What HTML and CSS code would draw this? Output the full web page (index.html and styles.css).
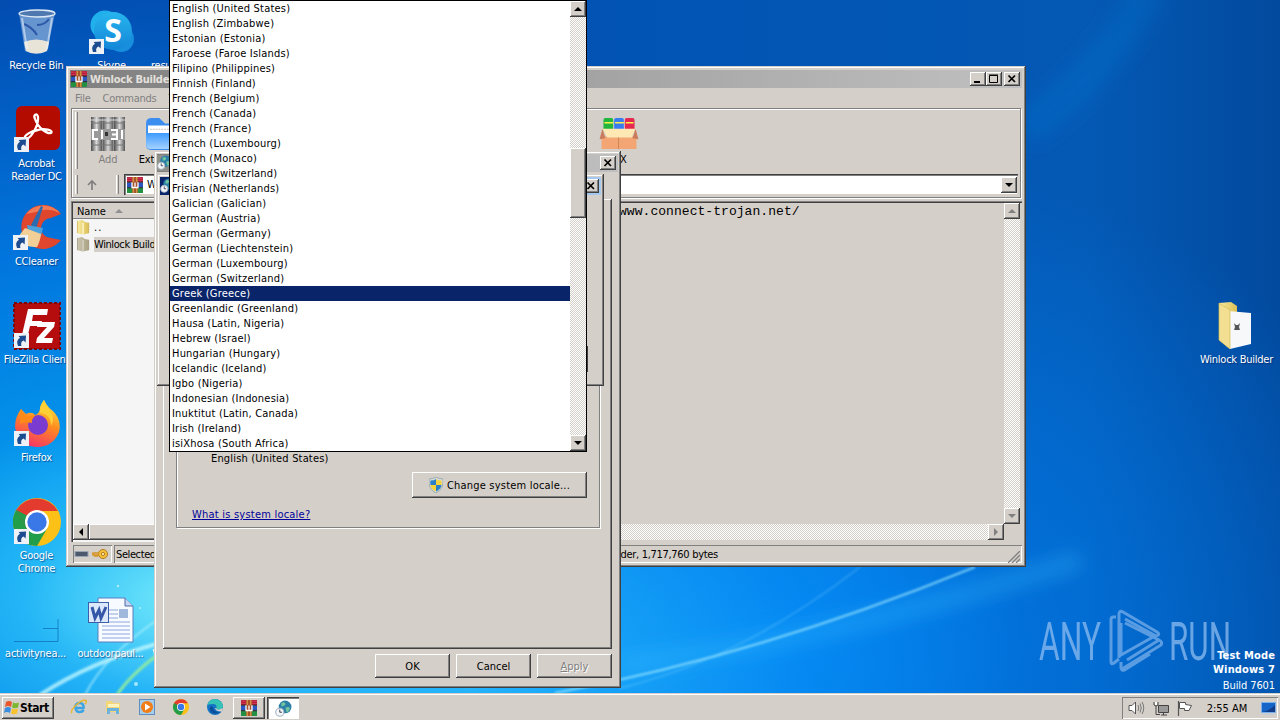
FILE: index.html
```html
<!DOCTYPE html>
<html lang="en">
<head>
<meta charset="utf-8">
<title>Desktop</title>
<link rel="stylesheet" href="styles.css">
</head>
<body>
<svg class="defs" width="0" height="0">
  <defs>
    <linearGradient id="gFold" x1="0" x2="1"><stop offset="0" stop-color="#f8eba0"/><stop offset="1" stop-color="#dcbf55"/></linearGradient>
    <linearGradient id="gFire" x1="0.7" y1="0" x2="0.3" y2="1"><stop offset="0" stop-color="#ffe53b"/><stop offset=".45" stop-color="#ff8b20"/><stop offset="1" stop-color="#f5306a"/></linearGradient>
    <linearGradient id="gSky" x1="0" y1="0" x2="0" y2="1"><stop offset="0" stop-color="#27b5ee"/><stop offset="1" stop-color="#1486d8"/></linearGradient>
    <linearGradient id="gBlue" x1="0" y1="0" x2="0" y2="1"><stop offset="0" stop-color="#3d9bff"/><stop offset="1" stop-color="#a5d2ff"/></linearGradient>
    <linearGradient id="gBook" x1="0" x2="1"><stop offset="0" stop-color="#4a4a4a"/><stop offset=".5" stop-color="#d8d8d8"/><stop offset="1" stop-color="#555"/></linearGradient>
    <symbol id="short" viewBox="0 0 15 15"><rect width="15" height="15" fill="#eef2f6"/><path d="M4 13 Q1.5 7.5 6 4.8 L4.6 3 L12 2.4 L11.6 9.4 L9.6 7.6 Q6.3 9 7.4 13 Z" fill="#1d4b90"/></symbol>
    <symbol id="rar" viewBox="0 0 16 16"><rect x="0" y="0" width="16" height="5" fill="#b3203c"/><rect x="0" y="5.5" width="16" height="5" fill="#2b55c0"/><rect x="0" y="11" width="16" height="5" fill="#239044"/><path d="M0 1.2h16M0 3.6h16" stroke="#e0405c" stroke-width=".7"/><path d="M0 5.2h16M0 10.7h16" stroke="#222"/><rect x="5.2" width="5.6" height="16" fill="#a6532c"/><path d="M6.2 0v5M9.8 0v5M6.2 11v5M9.8 11v5" stroke="#e6b04a"/><path d="M5 5.3v5.2h6V5.3M8 5.5v4" stroke="#fff" stroke-width="1.3" fill="none"/></symbol>
    <symbol id="chrome" viewBox="0 0 48 48"><circle cx="24" cy="24" r="24" fill="#fbc116"/><path d="M3.2 12A24 24 0 0 0 24 48L34.4 30H24Z" fill="#229d4a"/><path d="M3.2 12 13.6 30 24 24 24 13H44.8A24 24 0 0 0 3.2 12Z" fill="#e33b2e"/><path d="M3.2 12 13.6 30 19 20Z" fill="#229d4a"/><circle cx="24" cy="24" r="12" fill="#fff"/><circle cx="24" cy="24" r="9.7" fill="#3b78e7"/></symbol>
    <symbol id="folder" viewBox="0 0 13 16"><path d="M0 1 5 0 8 2 12 3V14L6 15.5 0 14Z" fill="url(#gFold)"/><path d="M6 3V15.5" stroke="#fff8d0" stroke-width="1.5"/><path d="M0 1V14M12 3V14" stroke="#c9a94a" stroke-width=".8"/></symbol>
    <symbol id="x" viewBox="0 0 16 14"><path d="M4.5 3.5 11 10M11 3.5 4.500 10" stroke="#000" stroke-width="1.7"/></symbol>
    <symbol id="globe" viewBox="0 0 16 16"><circle cx="9.500" cy="6.500" r="6" fill="#2b7fa6"/><path d="M6 3q3-2 4 1-1 2-4 2zM10 7q4-1 4 1l-2 4q-2-1-2-5z" fill="#74c4a0"/><circle cx="4.500" cy="11.500" r="3.800" fill="#f4f8fa" stroke="#a8b4c0"/><path d="M4.500 9V11.500H6.500" stroke="#334" stroke-width=".9" fill="none"/></symbol>
  </defs>
</svg>

<main class="desktop">
  <svg class="wall" width="1280" height="693" viewBox="0 0 1280 693">
    <defs><filter id="soft"><feGaussianBlur stdDeviation="1.1"/></filter><filter id="wide"><feGaussianBlur stdDeviation="9"/></filter></defs>
    <g fill="none" filter="url(#wide)">
      <path d="M620 665Q830 640 1080 560" stroke="#3cc0ff" stroke-opacity=".3" stroke-width="18"/>
      <path d="M1025 130Q1120 60 1150 -20" stroke="#0c7cd8" stroke-opacity=".25" stroke-width="36"/>
    </g>
    <g fill="none" filter="url(#soft)">
      <path d="M40 695Q90 662 160 643" stroke="#c8fbff" stroke-opacity=".75" stroke-width="4"/>
      <path d="M85 695Q105 655 160 618" stroke="#bff6ff" stroke-opacity=".6" stroke-width="2"/>
      <path d="M117 695Q130 675 160 653" stroke="#9aee9a" stroke-opacity=".9" stroke-width="3"/>
      <path d="M555 693Q760 655 975 567" stroke="#a5ecff" stroke-opacity=".7" stroke-width="2"/>
      <path d="M620 688Q740 660 860 567" stroke="#9be4ff" stroke-opacity=".3" stroke-width="1.500"/>
    </g>
    <g fill="#d8fbff" fill-opacity=".7"><circle cx="136" cy="684" r="2"/><circle cx="118" cy="586" r="1.200"/><circle cx="140" cy="608" r="1"/></g>
  </svg>

  <div class="dicon" style="left:-1px;top:8px">
    <svg width="46" height="46" viewBox="0 0 46 46"><path d="M5 4 11 42Q23 48 33 42L41 4Z" fill="#a8c2e0" fill-opacity=".6"/><path d="M10 33Q22 28 35 33L33 42Q22 47 12 42Z" fill="#e8e4d8"/><ellipse cx="23" cy="4.500" rx="18" ry="3.500" fill="#5078b0" stroke="#dce9f5" stroke-width="1.300"/><path d="M10 15q8 3 13 11M35 10q-4 6-12 6" stroke="#2c56a8" stroke-width="2" fill="none"/><path d="M8 9 13 40M38 9 33 40" stroke="#eef6ff" stroke-opacity=".55" stroke-width="2"/></svg>
    <span>Recycle Bin</span></div>
  <div class="dicon" style="left:74px;top:8px">
    <svg width="48" height="48" viewBox="0 0 48 48"><circle cx="17" cy="17" r="14.500" fill="#20b0ec"/><circle cx="33" cy="31" r="13" fill="#178fdc"/><circle cx="25" cy="23" r="19" fill="url(#gSky)"/><text x="25" y="34" text-anchor="middle" class="skype-s">S</text><use href="#short" x="1" y="31" width="15" height="15"/></svg>
    <span>Skype</span></div>
  <div class="dicon" style="left:134px;top:8px"><i class="blank"></i><span>resulta...</span></div>
  <div class="dicon" style="left:-1px;top:106px">
    <svg width="48" height="48" viewBox="0 0 48 48"><rect x="3" y="0" width="44" height="44" rx="6" fill="#b30b00"/><path d="M12 33C17 34 26 20 25 11 24 6 20 9 22 13 25 22 34 28 38 27 41 24 31 22 25 24 19 25 10 29 12 33Z" fill="none" stroke="#fff" stroke-width="2.300"/><use href="#short" x="1" y="31" width="15" height="15"/></svg>
    <span>Acrobat<br>Reader DC</span></div>
  <div class="dicon" style="left:-1px;top:204px">
    <svg width="50" height="48" viewBox="0 0 50 48"><path d="M49 10A22 22 0 1 0 49 36L39 34A10 10 0 1 1 39 14Z" fill="#e0452d"/><path d="M48 9A22 22 0 0 0 14 10L24 8Q36 3 48 9Z" fill="#f47a55"/><path d="M31 3 24 25 19 21 29 2Z" fill="#2b6cb0"/><path d="M15 21 31 24 29 32 16 27Z" fill="#4aa0dc"/><path d="M13 24 29 30Q28 38 25 43 12 44 6 33Z" fill="#f3cf98"/><use href="#short" x="1" y="31" width="15" height="15"/></svg>
    <span>CCleaner</span></div>
  <div class="dicon" style="left:-1px;top:302px">
    <svg width="48" height="48" viewBox="0 0 48 48"><rect x="1" y="1" width="46" height="46" fill="#b50d0d" stroke="#7c0707" stroke-width="2" stroke-dasharray="3 2"/><path d="M15 7H35L34 13H20L19 19H29L28 24H17L14 37H8Z" fill="#fff"/><path d="M25 20H42L41 25 31 36H40L39 41H23L24 36 34 25H24Z" fill="#fff"/><use href="#short" x="1" y="31" width="15" height="15"/></svg>
    <span>FileZilla Client</span></div>
  <div class="dicon" style="left:-1px;top:400px">
    <svg width="48" height="48" viewBox="0 0 48 48"><path d="M31 0Q35 8 40 11 49 20 46 32 40 47 24 47 5 46 2 27 2 17 8 9L13 14Q19 11 22 15 26 14 27 9 27 5 31 0Z" fill="url(#gFire)"/><circle cx="25" cy="25" r="10" fill="#7a3bd0"/><path d="M8 9 13 17 23 15Q18 19 19 23 12 21 7 24Z" fill="#ff8a18"/><path d="M27 13Q38 14 38 26 42 20 38 12 34 8 31 0 26 7 27 13Z" fill="#ffcf36"/><use href="#short" x="1" y="31" width="15" height="15"/></svg>
    <span>Firefox</span></div>
  <div class="dicon" style="left:-1px;top:498px">
    <svg width="48" height="48" viewBox="0 0 48 48"><use href="#chrome" width="48" height="48"/><use href="#short" x="1" y="31" width="15" height="15"/></svg>
    <span>Google<br>Chrome</span></div>
  <div class="dicon" style="left:-2px;top:596px">
    <svg width="46" height="46" viewBox="0 0 46 46"><path d="M1 44.500H45V22M30 31.500H45" stroke="#0c70b8" stroke-opacity=".75" fill="none"/></svg>
    <span>activitynea...</span></div>
  <div class="dicon" style="left:73px;top:596px">
    <svg width="46" height="46" viewBox="0 0 46 46"><path d="M10 1H37L45 9V45H10Z" fill="#f7faff" stroke="#5a7fc0"/><path d="M37 1V9H45" fill="#c6d6f0" stroke="#4a69a8"/><path d="M14 13H30M14 17H30M14 21H30M14 25H42M14 29H42M14 33H42M14 37H42M14 41H42" stroke="#90a8dc"/><rect x="31" y="12" width="9" height="9" fill="#9fb8dc"/><rect x="0.500" y="5.500" width="20" height="20" fill="#dce8fb" stroke="#3b5fa8"/><path d="M4 10 7 21 11 13 13 21 18 10" fill="none" stroke="#3457a8" stroke-width="3"/></svg>
    <span>outdoorpaul...</span></div>
  <div class="dicon" style="left:127px;top:596px"><i class="blank"></i><span>Word</span></div>
  <div class="dicon" style="left:1199px;top:302px">
    <svg width="46" height="48" viewBox="0 0 46 48"><path d="M5 1 17 0 23 4V40L16 47 5 38Z" fill="url(#gFold)"/><path d="M14 9 37 11V42L16 47Z" fill="#f7f8fa"/><path d="M5 1 16 8V47L5 38Z" fill="#f2df92" stroke="#d6bc58" stroke-width=".7"/><path d="M20 21l2 2h2l2-2-1 4 1 3h-6l1-3z" fill="#555"/></svg>
    <span>Winlock Builder</span></div>

  <div class="mark">
    <svg width="196" height="66" viewBox="0 0 196 66"><g fill="#8dbcf0"><text x="2" y="52" textLength="62" lengthAdjust="spacingAndGlyphs">ANY</text><text x="132" y="52" textLength="62" lengthAdjust="spacingAndGlyphs">RUN</text></g><path d="M79 9H76Q74 9 74 12V54Q74 57 77 55L82 51M82 50V6Q82 2 86 4L120 24Q124 27 119 28L88 11M85 61 124 37Q126 34 122 32L88 15M84 54V60Q85 64 89 61L113 46M90 52 122 32M84 15V47L116 29" fill="none" stroke="#78aeea" stroke-width="3"/></svg>
  </div>
  <div class="build"><b>Test Mode</b><b>Windows 7</b><span>Build 7601</span></div>

  <section class="win rar-win">
    <header class="title"><svg width="17" height="16"><use href="#rar" width="16" height="16"/></svg><b>Winlock Builder</b>
      <div class="ctl"><i class="tb"><svg width="16" height="14"><path d="M4 10h6" stroke="#000" stroke-width="2"/></svg></i><i class="tb"><svg width="16" height="14"><path d="M3.500 3.500h8v7h-8zM3 3h9" fill="none" stroke="#000"/></svg></i><i class="tb gap"><svg width="16" height="14"><use href="#x" width="16" height="14"/></svg></i></div>
    </header>
    <nav class="menu"><span>File</span><span>Commands</span><span>Tools</span></nav>
    <div class="toolbar">
      <div class="tools">
        <i class="grip"></i>
        <div class="tool dim"><svg width="34" height="34" viewBox="0 0 34 34"><rect width="11" height="34" fill="url(#gBook)"/><rect x="11.500" width="11" height="34" fill="url(#gBook)"/><rect x="23" width="11" height="34" fill="url(#gBook)"/><path d="M0 6h34M0 28h34" stroke="#777"/><path d="M0 3h34" stroke="#ddd"/><rect y="12" width="34" height="11" fill="#9a9a9a"/><path d="M7 13H2v9h5M11 13v9M20 13h6v9h-6M21 17.500h4M31 13v9" stroke="#fff" stroke-width="2" fill="none"/><path d="M14 15h3v4h-3z" fill="#333"/></svg><span>Add</span></div>
        <div class="tool ext"><svg width="40" height="36" viewBox="0 0 40 36"><path d="M0 6Q0 1 6 1H14L20 7H38V30Q38 35 32 35H6Q0 35 0 30Z" fill="#3c8df0"/><path d="M2 9H40V18H2Z" fill="#fff"/><path d="M0 17H40V34H6Q0 34 0 29Z" fill="url(#gBlue)"/><path d="M4 13H36" stroke="#bbb" stroke-dasharray="2 1"/></svg><span>Extract To</span></div>
        <div class="tool sfx"><svg width="40" height="35" viewBox="0 0 40 35"><rect x="4" y="1" width="10" height="14" rx="2" fill="#22b63c"/><rect x="15" y="1" width="10" height="14" rx="2" fill="#377cf0"/><rect x="26" y="1" width="10" height="14" rx="2" fill="#e42850"/><path d="M5 6h9M16 6h9M27 6h8" stroke="#fff04a" stroke-width="1.500"/><path d="M2 20H38V33H2Z" fill="#f3a674"/><path d="M3 12H37L33 21H8Z" fill="#ffe8b4"/><path d="M3 12 0 23 6 22ZM37 12 40 23 34 22Z" fill="#c97b5a"/><path d="M19.500 21V33" stroke="#d08558"/></svg><span>SFX</span></div>
      </div>
      <div class="address">
        <i class="grip"></i><svg class="go-up" width="12" height="12" viewBox="0 0 12 12"><path d="M6 11V2M2 6 6 2 10 6" stroke="#808080" stroke-width="1.700" fill="none"/></svg><i class="grip second"></i>
        <div class="combo"><svg width="17" height="16"><use href="#rar" width="16" height="16"/></svg><span>Winlock</span><i class="sb"><b class="dn"></b></i></div>
      </div>
    </div>
    <div class="panes">
      <div class="list">
        <div class="head">Name<i class="tri"></i></div>
        <div class="row"><svg width="13" height="15"><use href="#folder" width="13" height="15"/></svg><span class="dots">..</span></div>
        <div class="row sel"><svg width="13" height="15"><use href="#folder" width="13" height="15"/></svg><span>Winlock Builder</span></div>
        <div class="hbar"><i class="sb"><b class="lf"></b></i><i class="thumb"></i></div>
      </div>
      <div class="comment">
        <pre>www.connect-trojan.net/</pre>
        <div class="vbar"><i class="sb"><b class="up g"></b></i><i class="sb"><b class="dn g"></b></i></div>
        <div class="hbar"><i class="sb"><b class="rt g"></b></i></div>
      </div>
    </div>
    <footer class="status"><div class="cell icons"><svg width="36" height="12" viewBox="0 0 36 12"><rect x="1" y="3.500" width="13" height="5" fill="#4c586c" stroke="#98a4b4"/><circle cx="29" cy="6" r="4.500" fill="#f5c13c" stroke="#b4781c"/><circle cx="29" cy="6" r="1.600" fill="#fff2b0" stroke="#b4781c"/><path d="M25 5H19V7H25M20 8H24" stroke="#d59424" stroke-width="1.600" fill="none"/></svg></div><div class="cell chosen">Selected 1 folder</div><div class="cell total">Total 1 folder, 1,717,760 bytes<svg class="size" width="12" height="12"><path d="M0 12 12 0M4 12 12 4M8 12 12 8" stroke="#808080" stroke-width="1.300"/></svg></div></footer>
  </section>

  <section class="win region">
    <header class="title"><svg width="16" height="16"><rect width="16" height="16" fill="#90908a"/><use href="#globe" width="15" height="15"/></svg><div class="ctl"><i class="tb"><svg width="16" height="14"><use href="#x" width="16" height="14"/></svg></i></div></header>
    <div class="page">
      <div class="group">
        <p class="locale">English (United States)</p>
        <button class="btn change"><svg width="14" height="16" viewBox="0 0 14 16"><path d="M7 0Q10 2 14 2 15 12 7 16 -1 12 0 2 4 2 7 0Z" fill="#d8dde2" stroke="#9aa"/><path d="M7 2V8H1.500Q1 5 1.500 3.500 5 3.500 7 2ZM7 8h5.500Q12 12 7 14.500Z" fill="#2a7fc8"/><path d="M7 2Q9 3.500 12.500 3.500 13 6 12.500 8H7ZM7 8V14.500Q2 12 1.500 8Z" fill="#f6d33c"/></svg><span>Change system locale...</span></button>
        <a class="link">What is system locale?</a>
      </div>
    </div>
    <div class="actions"><button class="btn">OK</button><button class="btn">Cancel</button><button class="btn off"><u>A</u>pply</button></div>
  </section>

  <section class="win inner">
    <header class="title"><svg width="16" height="16"><use href="#globe" width="15" height="15"/></svg><div class="ctl"><i class="tb"><svg width="16" height="14"><use href="#x" width="16" height="14"/></svg></i></div></header>
    <i class="edge"></i>
  </section>

  <section class="drop">
    <ul>
      <li>English (United States)</li><li>English (Zimbabwe)</li><li>Estonian (Estonia)</li><li>Faroese (Faroe Islands)</li><li>Filipino (Philippines)</li><li>Finnish (Finland)</li><li>French (Belgium)</li><li>French (Canada)</li><li>French (France)</li><li>French (Luxembourg)</li><li>French (Monaco)</li><li>French (Switzerland)</li><li>Frisian (Netherlands)</li><li>Galician (Galician)</li><li>German (Austria)</li><li>German (Germany)</li><li>German (Liechtenstein)</li><li>German (Luxembourg)</li><li>German (Switzerland)</li><li class="on">Greek (Greece)</li><li>Greenlandic (Greenland)</li><li>Hausa (Latin, Nigeria)</li><li>Hebrew (Israel)</li><li>Hungarian (Hungary)</li><li>Icelandic (Iceland)</li><li>Igbo (Nigeria)</li><li>Indonesian (Indonesia)</li><li>Inuktitut (Latin, Canada)</li><li>Irish (Ireland)</li><li>isiXhosa (South Africa)</li>
    </ul>
    <div class="vbar"><i class="sb"><b class="up"></b></i><i class="thumb"></i><i class="sb"><b class="dn"></b></i></div>
  </section>
</main>

<footer class="taskbar">
  <div class="start"><svg width="16" height="16" viewBox="0 0 16 16"><path d="M2 2Q5 0 8 2L7 7Q4 5 1 7Z" fill="#e8562a"/><path d="M9 2.500Q12 4 15 2.500L14 7.500Q11 9 8 7.500Z" fill="#7cb82f"/><path d="M1 8Q4 6 7 8L6 13Q3 11 0 13Z" fill="#3a8ee0"/><path d="M8 8.500Q11 10 14 8.500L13 13.500Q10 15 7 13.500Z" fill="#f8c22c"/></svg><b>Start</b></div>
  <div class="quick">
    <svg width="16" height="16" viewBox="0 0 16 16"><path d="M13.500 9H4.500Q5 13 8.500 13 11.500 13 12.800 11" fill="none" stroke="#3ba4e4" stroke-width="2.300"/><path d="M4 8.500Q4.500 4 8.500 4 12.800 4 12.800 9" fill="none" stroke="#3ba4e4" stroke-width="2.300"/><path d="M1 14Q-1 12 5 6 12 0 15 1.500 16 3 14 5" fill="none" stroke="#e8b62c" stroke-width="1.400"/></svg>
    <svg width="16" height="16" viewBox="0 0 16 16"><path d="M1 2H7L8 4H15V13H1Z" fill="#f3d676"/><path d="M3 5H14V8H3Z" fill="#fff4c0"/><path d="M2 9H14V15H11V12H5V15H2Z" fill="#6db3e0"/></svg>
    <svg width="16" height="16" viewBox="0 0 16 16"><rect x=".5" y=".5" width="15" height="15" fill="#a8cdea" stroke="#5c8fc0"/><circle cx="8" cy="8" r="6" fill="#f07d18"/><path d="M6 4.500 11.500 8 6 11.500Z" fill="#fff"/></svg>
    <svg width="16" height="16"><use href="#chrome" width="16" height="16"/></svg>
    <svg width="16" height="16" viewBox="0 0 16 16"><circle cx="8" cy="8" r="8" fill="#1574c4"/><path d="M.5 6Q2 0 8 0 15 1 16 7 16 10 12 10.500 9 10.500 9.500 9 10 5 6 5 2 5 .5 6Z" fill="#34c3b4"/><path d="M6 8Q6 13 13 13 9 16 5 14 1 11 4 7Z" fill="#0c4f9c"/><path d="M9.500 9Q9 10.500 12 10.500L16 9 15 12.500Q9 13 8 9Z" fill="#d5cfc9"/></svg>
  </div>
  <div class="task"><svg width="16" height="16"><use href="#rar" width="16" height="16"/></svg></div>
  <div class="task down"><svg width="17" height="17"><use href="#globe" width="17" height="17"/></svg></div>
  <div class="tray">
    <svg width="17" height="14" viewBox="0 0 17 14"><path d="M1 4.500H4L7.500 1V13L4 9.500H1Z" fill="#fff" stroke="#555"/><path d="M10 4Q11.500 7 10 10M12 2.500Q14.500 7 12 11.500M14 1Q17.500 7 14 13" fill="none" stroke="#777"/></svg>
    <svg width="16" height="15" viewBox="0 0 16 15"><path d="M5.500 4.500H15.500V11.500H5.500Z" fill="#999" stroke="#444"/><path d="M1 1V4Q3 6 5 4V1M3 5V13.500H7M8 14H14M10.500 12V14" stroke="#444" fill="none"/><path d="M2 1h2v3H2z" fill="#fff"/></svg>
    <svg width="16" height="15" viewBox="0 0 16 15"><path d="M1.500 0V15" stroke="#555" stroke-width="1.200"/><path d="M2.500 1.500H8.500V3.500L14.500 4.500 12 9.500H7.500V7.500H2.500Z" fill="#fff" stroke="#555"/></svg>
    <span>2:55 AM</span>
    <svg width="15" height="13" viewBox="0 0 15 13"><rect x=".5" y=".5" width="14" height="10" fill="#1565c8" stroke="#7ab0ea"/><path d="M1 10Q8 9 14 3V10Z" fill="#123c88"/><path d="M2 12H13" stroke="#bcd"/></svg>
  </div>
</footer>
</body>
</html>
```
FILE: styles.css
```css
* { box-sizing: border-box; }
body { margin: 0; width: 1280px; height: 720px; overflow: hidden; display: flex; flex-direction: column;
  font: 11px/13px "DejaVu Sans Condensed", "DejaVu Sans", sans-serif; font-stretch: condensed; letter-spacing: -0.25px; color: #000; }
svg { display: block; flex: none; }
i { font-style: normal; }
.defs { position: absolute; }

.desktop { position: relative; height: 693px; flex: none; overflow: hidden;
  background:
    radial-gradient(ellipse 330px 190px at 190px 600px, rgba(125,240,250,.95), rgba(60,205,250,.55) 50%, rgba(30,170,245,0) 100%),
    radial-gradient(ellipse 560px 430px at 470px 690px, rgba(40,185,255,.9), rgba(10,150,250,.5) 60%, rgba(0,110,220,0) 100%),
    radial-gradient(ellipse 800px 620px at 100px 560px, #06a6f4, rgba(0,130,235,.8) 50%, rgba(0,80,190,0) 100%),
    radial-gradient(ellipse 700px 500px at 760px 640px, rgba(0,130,245,.9), rgba(0,110,225,0) 100%),
    linear-gradient(90deg, #0343a6, #0254b4 50%, #0459b4 85%, #024a9e); }
.wall { position: absolute; left: 0; top: 0; }

.dicon { position: absolute; width: 75px; display: flex; flex-direction: column; align-items: center; color: #fff; text-align: center; }
.dicon > svg, .blank { height: 48px; margin-bottom: 3px; }
.dicon span { white-space: nowrap; text-shadow: 1px 1px 1px rgba(0,30,90,.6); }
.skype-s { font: bold 32px "Open Sans", sans-serif; fill: #fff; }

.mark { position: absolute; left: 1037px; top: 608px; opacity: .75; }
.mark svg { overflow: visible; }
.mark text { font: 400 53px Roboto, sans-serif; letter-spacing: 0; }
.build { position: absolute; right: 5px; top: 649px; display: flex; flex-direction: column; align-items: flex-end; color: #fff; line-height: 14px; letter-spacing: -.1px; }
.build b { letter-spacing: .15px; }
.build span { margin-top: 2px; }

.win { position: absolute; background: #d5cfc9; display: flex; flex-direction: column; padding: 4px;
  box-shadow: inset -1px -1px #404040, inset 1px 1px #d5cfc9, inset -2px -2px #808080, inset 2px 2px #fff; }
.title { height: 18px; flex: none; display: flex; align-items: center; padding: 0 2px 0 1px; color: #e4e0dc;
  background: linear-gradient(90deg, #808080, #c0c0c0); }
.title b { margin-left: 2px; }
.ctl { margin-left: auto; display: flex; }
.tb, .sb, .thumb { background: #d5cfc9; box-shadow: inset -1px -1px #404040, inset 1px 1px #fff, inset -2px -2px #808080; }
.tb { width: 16px; height: 14px; }
.gap { margin-left: 2px; }
.sb { width: 16px; height: 16px; flex: none; display: flex; align-items: center; justify-content: center; }
.sb b { border: 4px solid transparent; width: 0; height: 0; color: #000; }
.sb .g { color: #808080; }
.sb .up { border-top: 0; border-bottom-color: currentColor; }
.sb .dn { border-bottom: 0; border-top-color: currentColor; }
.sb .lf { border-left: 0; border-right-color: currentColor; }
.sb .rt { border-right: 0; border-left-color: currentColor; }
.vbar, .hbar { background: repeating-conic-gradient(#fff 0 25%, #d5cfc9 0 50%) 0 0 / 2px 2px; display: flex; }
.vbar { width: 16px; flex-direction: column; }
.hbar { height: 16px; }

.rar-win { left: 66px; top: 66px; width: 960px; height: 501px; }
.menu { height: 20px; flex: none; display: flex; gap: 12px; align-items: center; padding-left: 5px; color: #808080; }
.toolbar { margin: 0 1px; height: 90px; flex: none; border: 1px solid #808080; box-shadow: inset 1px 1px #fff, 1px 1px #fff; padding: 3px 2px 1px 3px; display: flex; flex-direction: column; }
.tools { height: 61px; display: flex; align-items: flex-start; }
.grip { flex: none; width: 3px; height: 57px; background: #d5cfc9; border-left: 1px solid #fff; border-right: 1px solid #808080; }
.tool { display: flex; flex-direction: column; align-items: center; width: 60px; padding-top: 5px; white-space: nowrap; }
.tool span { margin-top: 2px; height: 13px; }
.dim { color: #808080; }
.dim span { letter-spacing: -.1px; }
.tool svg { height: 34px; }
.ext { width: 50px; margin-left: 2px; }
.ext span { padding-right: 6px; }
.sfx { margin-left: 396px; width: 66px; }
.sfx span { padding-right: 3px; }
.address { height: 23px; display: flex; align-items: center; }
.address .grip { height: 19px; }
.address .go-up { margin-left: 8px; }
.address .second { margin-left: 18px; }
.combo { margin-left: 5px; flex: 1; height: 21px; background: #fff; display: flex; align-items: center; padding: 2px 1px 2px 3px; gap: 3px;
  box-shadow: inset 1px 1px #404040, inset 2px 2px #808080, inset -1px -1px #d5cfc9; }
.combo .sb { margin-left: auto; }

.panes { margin: 3px 0 0 1px; height: 341px; flex: none; display: flex; justify-content: space-between; }
.list, .comment { box-shadow: inset 1px 1px #808080, inset 2px 2px #404040; padding: 2px; }
.list { width: 330px; background: #f5f5f5; display: flex; flex-direction: column; }
.head { height: 16px; background: #d5cfc9; padding: 1px 4px; display: flex; align-items: center; gap: 9px; box-shadow: inset 0 -1px #808080; letter-spacing: -.1px; }
.head .tri { border: 4px solid transparent; border-top: 0; border-bottom: 4px solid #909090; }
.row { display: flex; align-items: center; height: 17px; padding-left: 4px; gap: 4px; white-space: nowrap; }
.row span { height: 15px; line-height: 16px; letter-spacing: -.4px; }
.row .dots { letter-spacing: 1px; }
.sel span { background: #d5cfc9; }
.sel svg { filter: saturate(.35) brightness(.85); }
.list .hbar { margin-top: auto; }
.list .thumb { width: 250px; }
.comment { width: 490px; display: grid; grid-template-columns: 1fr 16px; grid-template-rows: 1fr 16px; }
.comment pre { margin: 1px 0 0 85px; font: 13px/15px "Liberation Mono", monospace; letter-spacing: .05px; }
.comment .vbar { justify-content: space-between; }
.comment .hbar { grid-column: 1; justify-content: flex-end; }
.status { margin: 3px 0 0 3px; height: 18px; display: flex; gap: 2px; align-items: stretch; white-space: nowrap; }
.cell { box-shadow: inset 1px 1px #808080, inset -1px -1px #fff; padding: 3px 2px 0; letter-spacing: -.4px; line-height: 13px; }
.icons { width: 39px; padding: 3px 1px; }
.chosen { width: 430px; }
.total { flex: 1; padding-left: 30px; display: flex; letter-spacing: -.3px; }
.status .size { margin-left: auto; margin-top: 3px; }

.region { left: 154px; top: 151px; width: 467px; height: 537px; padding: 3px; }
.region .title svg, .inner .title svg { margin-left: -1px; }
.region .ctl svg, .inner .ctl svg { margin-left: 0; }
.page { margin: 27px 6px 0 6px; height: 450px; padding: 178px 12px 121px 13px; box-shadow: inset -1px -1px #404040, inset 1px 1px #fff, inset -2px -2px #808080; }
.group { height: 151px; border: 1px solid #808080; box-shadow: 1px 1px #fff, inset 1px 1px #fff; display: flex; flex-direction: column; padding: 74px 12px 0 15px; }
.locale { margin: 0 0 7px 19px; letter-spacing: .17px; }
.btn { border: 0; padding: 0; width: 75px; height: 24px; font: inherit; letter-spacing: 0; color: #000; background: #d5cfc9; box-shadow: inset -1px -1px #404040, inset 1px 1px #fff, inset -2px -2px #808080; }
.change { align-self: flex-end; width: 175px; height: 26px; display: flex; align-items: center; justify-content: center; gap: 4px; letter-spacing: .2px; }
.link { color: #00009a; text-decoration: underline; margin-top: 10px; letter-spacing: .22px; }
.actions { display: flex; justify-content: flex-end; gap: 6px; margin: 5px 6px 0 0; }
.off { color: #808080; text-shadow: 1px 1px #fff; }

.inner { left: 157px; top: 174px; width: 447px; height: 212px; padding: 3px; }
.inner .title { background: linear-gradient(90deg, #0a246a, #a6caf0); }
.edge { align-self: flex-end; margin: 151px 13px 0 0; width: 2px; height: 26px; background: #404040; }

.drop { position: absolute; left: 169px; top: 0; width: 418px; height: 452px; border: 1px solid #000; background: #fff; display: flex; }
.drop ul { list-style: none; margin: 0; padding: 0; flex: 1; }
.drop li { height: 15px; line-height: 16px; padding-left: 2px; letter-spacing: .2px; white-space: nowrap; }
.drop .on { background: #0a246a; color: #fff; }
.drop .thumb { height: 70px; margin: 131px 0 217px; flex: none; }

.taskbar { height: 27px; background: #d5cfc9; border-top: 1px solid #d5cfc9; box-shadow: inset 0 1px #fff; display: flex; align-items: flex-start; padding: 3px 2px 0; }
.start, .task { height: 22px; display: flex; align-items: center; box-shadow: inset -1px -1px #404040, inset 1px 1px #fff, inset -2px -2px #808080; }
.start { width: 52px; padding-left: 2px; gap: 0; }
.start b { font-size: 12px; letter-spacing: -.4px; }
.quick { display: flex; gap: 18px; padding: 2px 10px 0 17px; }
.task { width: 32px; justify-content: center; margin-right: 2px; }
.down { background: #fff; box-shadow: inset 1px 1px #404040, inset 2px 2px #808080, inset -1px -1px #fff; }
.tray { margin-left: auto; width: 156px; height: 22px; box-shadow: inset 1px 1px #808080, inset -1px -1px #fff; display: flex; align-items: center; padding: 0 2px 0 6px; gap: 8px; }
.tray span { margin: 0 auto; letter-spacing: 0; white-space: nowrap; }
```
